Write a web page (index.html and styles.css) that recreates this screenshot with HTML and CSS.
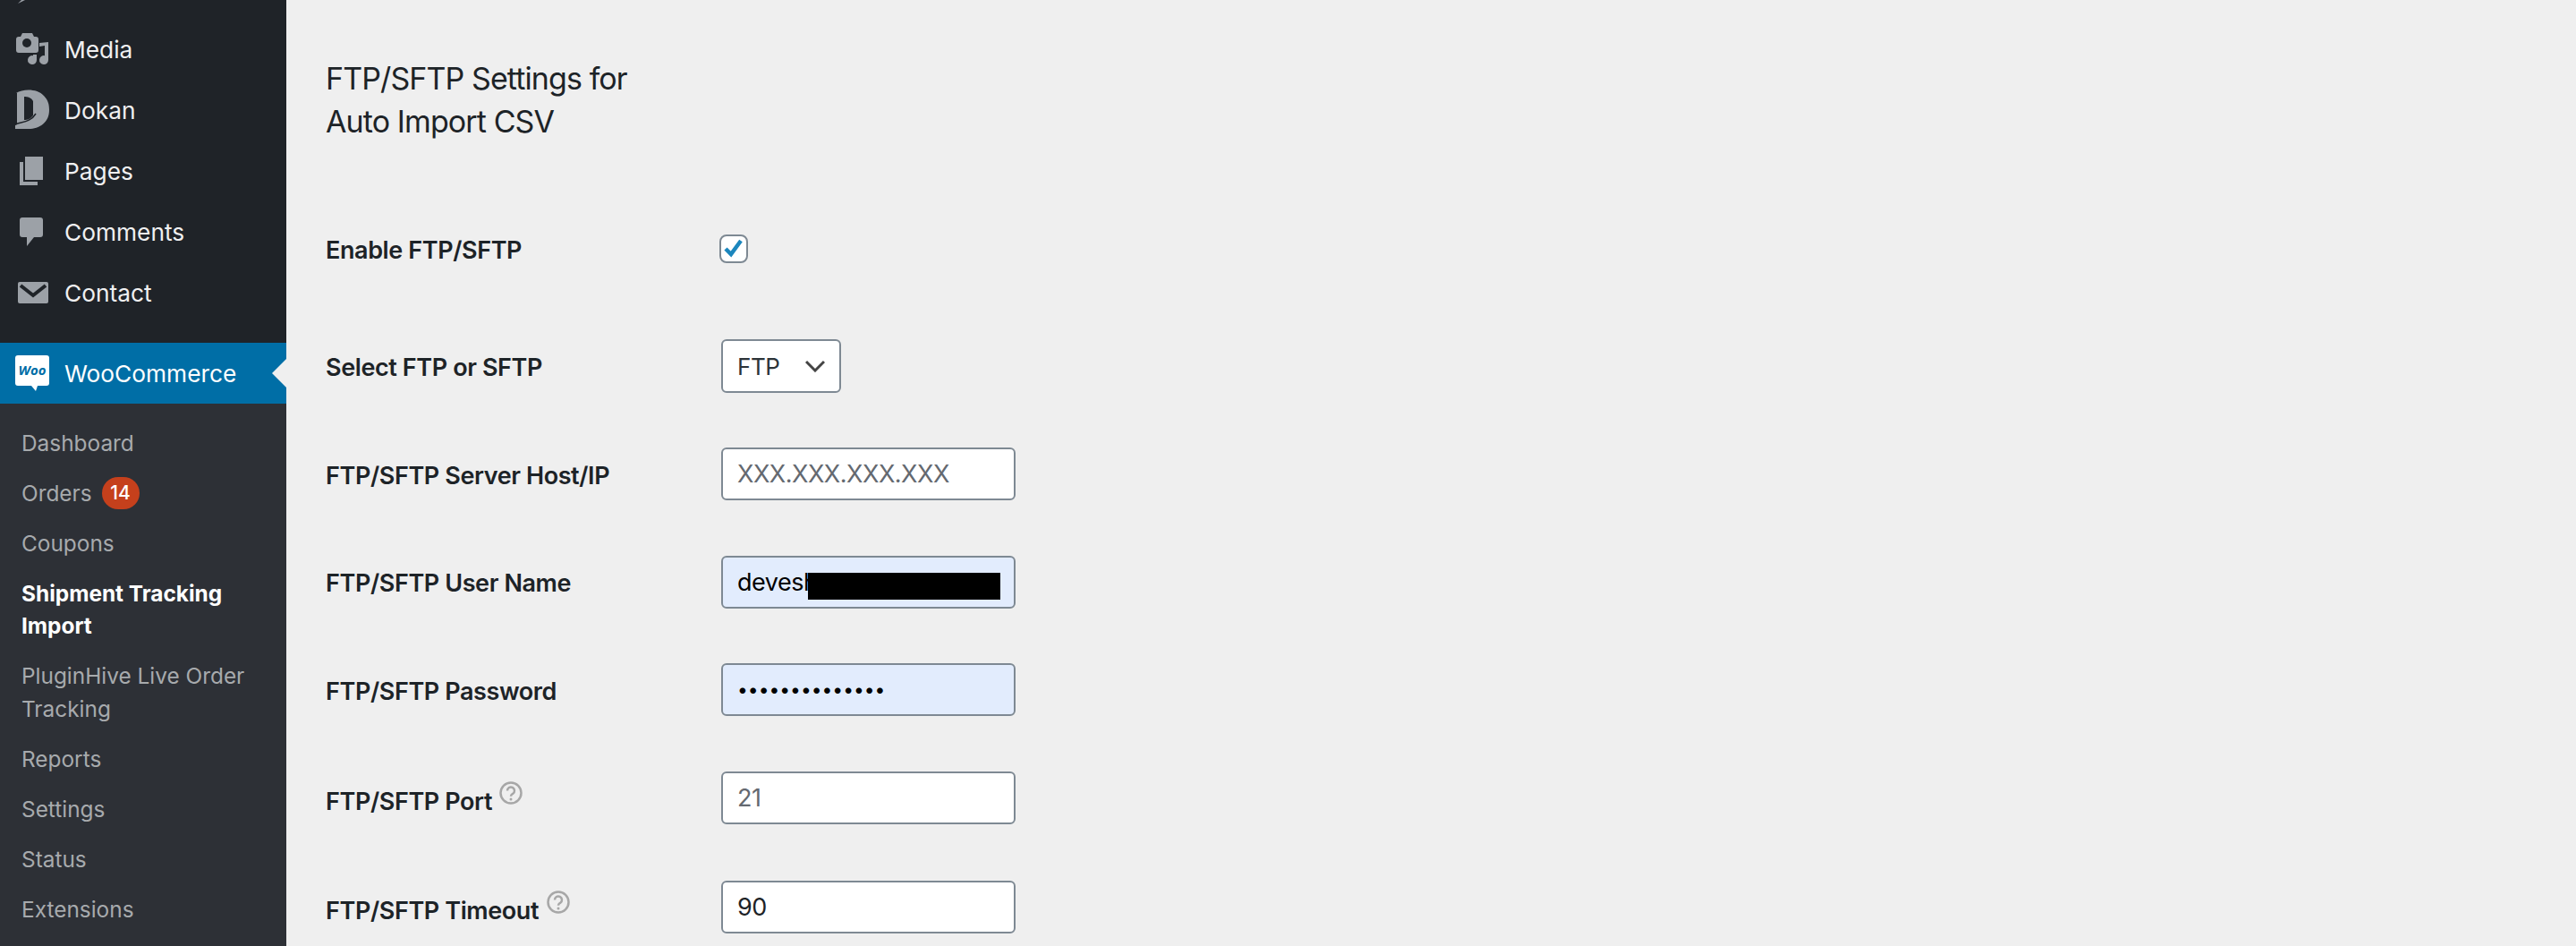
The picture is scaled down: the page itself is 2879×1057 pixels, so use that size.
FILE: index.html
```html
<!DOCTYPE html>
<html lang="en">
<head>
    <meta charset="UTF-8">
    <title>FTP/SFTP Settings</title>
    <link rel="stylesheet" href="styles.css">
</head>
<body>
    <aside class="sidebar">
        <ul class="menu">
            <li class="menu-item">
                <svg class="menu-icon" viewBox="0 0 40 40"><path d="M12 33L4 37L8 33z"/></svg>
            </li>
            <li class="menu-item">
                <svg class="menu-icon" viewBox="0 0 40 40">
                    <path d="M9 2h11l2 4h2c2 0 3 1 3 3v12c0 2-1 3-3 3H5c-2 0-3-1-3-3V9c0-2 1-3 3-3h2z"/>
                    <circle class="icon-hole" cx="14" cy="13" r="5"/>
                    <path d="M21 26h4v6a5 5 0 1 1-4-4.800z"/>
                    <path d="M28 13l10-1v20a5 5 0 1 1-4-4.800V16l-6 1z"/>
                </svg>
                <span>Media</span>
            </li>
            <li class="menu-item">
                <svg class="menu-icon" viewBox="0 0 40 40">
                    <path d="M2 1C10-4 26-4 33 4C38 9 39 14 39 20C39 34 28 41 16 41H1V37L3 36V1z"/>
                    <path class="icon-hole" d="M11 5C15 5 19 6 21 10V26C18 30 15 31 11 31z"/>
                    <path class="icon-crease" d="M1 36C8 33 18 34 24 24"/>
                </svg>
                <span>Dokan</span>
            </li>
            <li class="menu-item">
                <svg class="menu-icon" viewBox="0 0 40 40">
                    <path d="M12 4h20v26H12z"/>
                    <path d="M6 10h4v22h16v4H6z"/>
                </svg>
                <span>Pages</span>
            </li>
            <li class="menu-item">
                <svg class="menu-icon" viewBox="0 0 40 40">
                    <path d="M9 4h20c2 0 3 1 3 3v16c0 2-1 3-3 3h-7l-8 10V26H9c-2 0-3-1-3-3V7c0-2 1-3 3-3z"/>
                </svg>
                <span>Comments</span>
            </li>
            <li class="menu-item">
                <svg class="menu-icon" viewBox="0 0 40 40">
                    <rect x="4" y="8" width="34" height="24" rx="2"/>
                    <path class="icon-stroke" d="M7 12l14 11l14-11"/>
                </svg>
                <span>Contact</span>
            </li>
            <li class="menu-item menu-item-current">
                <svg class="menu-icon" viewBox="0 0 40 40">
                    <path class="icon-white" d="M4 0h32c2 0 3 1 3 3v28c0 2-1 3-3 3H26l-2 6l-5-6H4c-2 0-3-1-3-3V3c0-2 1-3 3-3z"/>
                    <text class="woo-text" x="20" y="22" text-anchor="middle">Woo</text>
                </svg>
                <span>WooCommerce</span>
            </li>
        </ul>
        <ul class="submenu">
            <li>Dashboard</li>
            <li>Orders <span class="badge">14</span></li>
            <li>Coupons</li>
            <li class="submenu-current">Shipment Tracking Import</li>
            <li>PluginHive Live Order Tracking</li>
            <li>Reports</li>
            <li>Settings</li>
            <li>Status</li>
            <li>Extensions</li>
        </ul>
    </aside>

    <main class="content">
        <h2 class="settings-title">FTP/SFTP Settings for Auto Import CSV</h2>
        <form class="settings-form">
            <div class="row row-enable">
                <label for="enable">Enable FTP/SFTP</label>
                <input class="check" type="checkbox" id="enable" checked>
            </div>
            <div class="row">
                <label for="mode">Select FTP or SFTP</label>
                <select class="select" id="mode">
                    <option>FTP</option>
                    <option>SFTP</option>
                </select>
            </div>
            <div class="row">
                <label for="host">FTP/SFTP Server Host/IP</label>
                <input class="field" type="text" id="host" placeholder="XXX.XXX.XXX.XXX">
            </div>
            <div class="row">
                <label for="user">FTP/SFTP User Name</label>
                <div class="field-wrap">
                    <input class="field field-filled" type="text" id="user" value="devesh">
                    <div class="redact"></div>
                </div>
            </div>
            <div class="row">
                <label for="pass">FTP/SFTP Password</label>
                <input class="field field-filled field-pass" type="password" id="pass" value="aaaaaaaaaaaaaa">
            </div>
            <div class="row">
                <label for="port">FTP/SFTP Port
                    <svg class="help" viewBox="0 0 26 26">
                        <circle cx="13" cy="13" r="11.500"/>
                        <path d="M9 10.500a4 4 0 1 1 6.300 3.200c-1.300 1-2.300 1.500-2.300 3"/>
                        <circle class="help-dot" cx="13" cy="20" r="1.500"/>
                    </svg>
                </label>
                <input class="field" type="text" id="port" placeholder="21">
            </div>
            <div class="row row-timeout">
                <label for="timeout">FTP/SFTP Timeout
                    <svg class="help" viewBox="0 0 26 26">
                        <circle cx="13" cy="13" r="11.500"/>
                        <path d="M9 10.500a4 4 0 1 1 6.300 3.200c-1.300 1-2.300 1.500-2.300 3"/>
                        <circle class="help-dot" cx="13" cy="20" r="1.500"/>
                    </svg>
                </label>
                <input class="field field-dark" type="text" id="timeout" value="90">
            </div>
        </form>
    </main>
</body>
</html>
```

FILE: styles.css
```css
html, body {
    height: 100%;
    margin: 0;
    overflow: hidden;
}

body {
    display: flex;
    font-family: Inter, "Noto Sans", sans-serif;
    background-color: #efefef;
    color: #1d2327;
}

ul {
    list-style: none;
    margin: 0;
    padding: 0;
}

/* sidebar */
.sidebar {
    width: 320px;
    flex-shrink: 0;
    background-color: #1f2328;
    display: flex;
    flex-direction: column;
}

.menu {
    margin-top: -47px;
}

.menu-item {
    height: 68px;
    display: flex;
    align-items: center;
    padding-left: 16px;
    gap: 16px;
    font-size: 26.3px;
    color: #f0f0f1;
}

.menu-item-current {
    position: relative;
    margin-top: 22px;
    background-color: #006ea6;
    color: #fff;
}

.menu-item-current::after {
    content: "";
    position: absolute;
    right: 0;
    top: 18px;
    border: 16px solid transparent;
    border-left: 0;
    border-right-color: #efefef;
}

.menu-icon {
    width: 40px;
    height: 40px;
    flex-shrink: 0;
    overflow: visible;
    fill: #9ca1a7;
}

.icon-hole {
    fill: #1f2328;
}

.icon-stroke {
    fill: none;
    stroke: #1f2328;
    stroke-width: 4;
}

.icon-crease {
    fill: none;
    stroke: #1f2328;
    stroke-width: 1.500;
}

.icon-white {
    fill: #fff;
}

.woo-text {
    font-family: "Open Sans", sans-serif;
    font-size: 15px;
    font-style: italic;
    font-weight: 700;
    fill: #006ea6;
}

.submenu {
    flex: 1;
    padding-top: 16px;
    background-color: #2d3036;
    font-size: 24.4px;
    line-height: 36.6px;
    color: #a7aaad;
}

.submenu li {
    padding: 9.7px 20px 9.7px 24px;
}

.submenu .submenu-current {
    color: #fff;
    font-weight: 700;
}

.badge {
    display: inline-block;
    min-width: 42px;
    height: 36px;
    margin-left: 4px;
    border-radius: 18px;
    background-color: #c5401c;
    color: #fff;
    font-size: 21px;
    font-weight: 500;
    line-height: 36px;
    text-align: center;
    vertical-align: top;
}

/* settings form */
.content {
    flex: 1;
    padding: 64px 44px 0;
}

.settings-title {
    width: 400px;
    margin: 0 0 88px;
    font-size: 34px;
    font-weight: 400;
    line-height: 48px;
    letter-spacing: -0.9px;
}

.row {
    display: grid;
    grid-template-columns: 442px 1fr;
    align-items: center;
    min-height: 59px;
    margin-bottom: 61.4px;
}

.row-enable {
    margin-bottom: 72px;
}

.row-timeout {
    margin-top: 63px;
}

.row label {
    padding-top: 3px;
    font-size: 27px;
    font-weight: 600;
    letter-spacing: -0.4px;
}

.help {
    width: 26px;
    height: 26px;
    margin-left: 2px;
    vertical-align: 6px;
    fill: none;
    stroke: #a7a7a7;
    stroke-width: 2.500;
}

.help-dot {
    fill: #a7a7a7;
    stroke: none;
}

.check {
    appearance: none;
    width: 32px;
    height: 32px;
    margin: 0 0 0 -2px;
    border: 2px solid #7e8993;
    border-radius: 8px;
    background: #fff url("data:image/svg+xml,%3Csvg xmlns='http://www.w3.org/2000/svg' viewBox='0 0 28 28'%3E%3Cpath d='M5 14l6 6L22 5' fill='none' stroke='%231b86bd' stroke-width='4.500'/%3E%3C/svg%3E") center no-repeat;
}

.select {
    appearance: none;
    width: 134px;
    height: 60px;
    padding: 0 16px;
    border: 2px solid #7e8993;
    border-radius: 6px;
    background: #fff url("data:image/svg+xml,%3Csvg xmlns='http://www.w3.org/2000/svg' viewBox='0 0 22 14'%3E%3Cpath d='M1 2l10 10L21 2' fill='none' stroke='%23444' stroke-width='3'/%3E%3C/svg%3E") right 16px center / 22px 14px no-repeat;
    font: 26px Inter, sans-serif;
    letter-spacing: -0.4px;
    color: #2c3338;
}

.field-wrap {
    position: relative;
    width: 329px;
}

.field {
    display: block;
    box-sizing: border-box;
    width: 329px;
    height: 59px;
    padding: 0 16px;
    border: 2px solid #7e8993;
    border-radius: 6px;
    background-color: #fff;
    font: 27px Inter, sans-serif;
    letter-spacing: -0.5px;
    color: #2c3338;
}

.field::placeholder {
    color: #646970;
    opacity: 1;
}

.field-filled {
    background-color: #e2ecfd;
    color: #000;
}

.field-dark {
    color: #1d2327;
}

.field-pass {
    font-size: 21px;
    letter-spacing: 0;
}

.redact {
    position: absolute;
    left: 97px;
    top: 19px;
    width: 215px;
    height: 30px;
    background-color: #000;
}
```
